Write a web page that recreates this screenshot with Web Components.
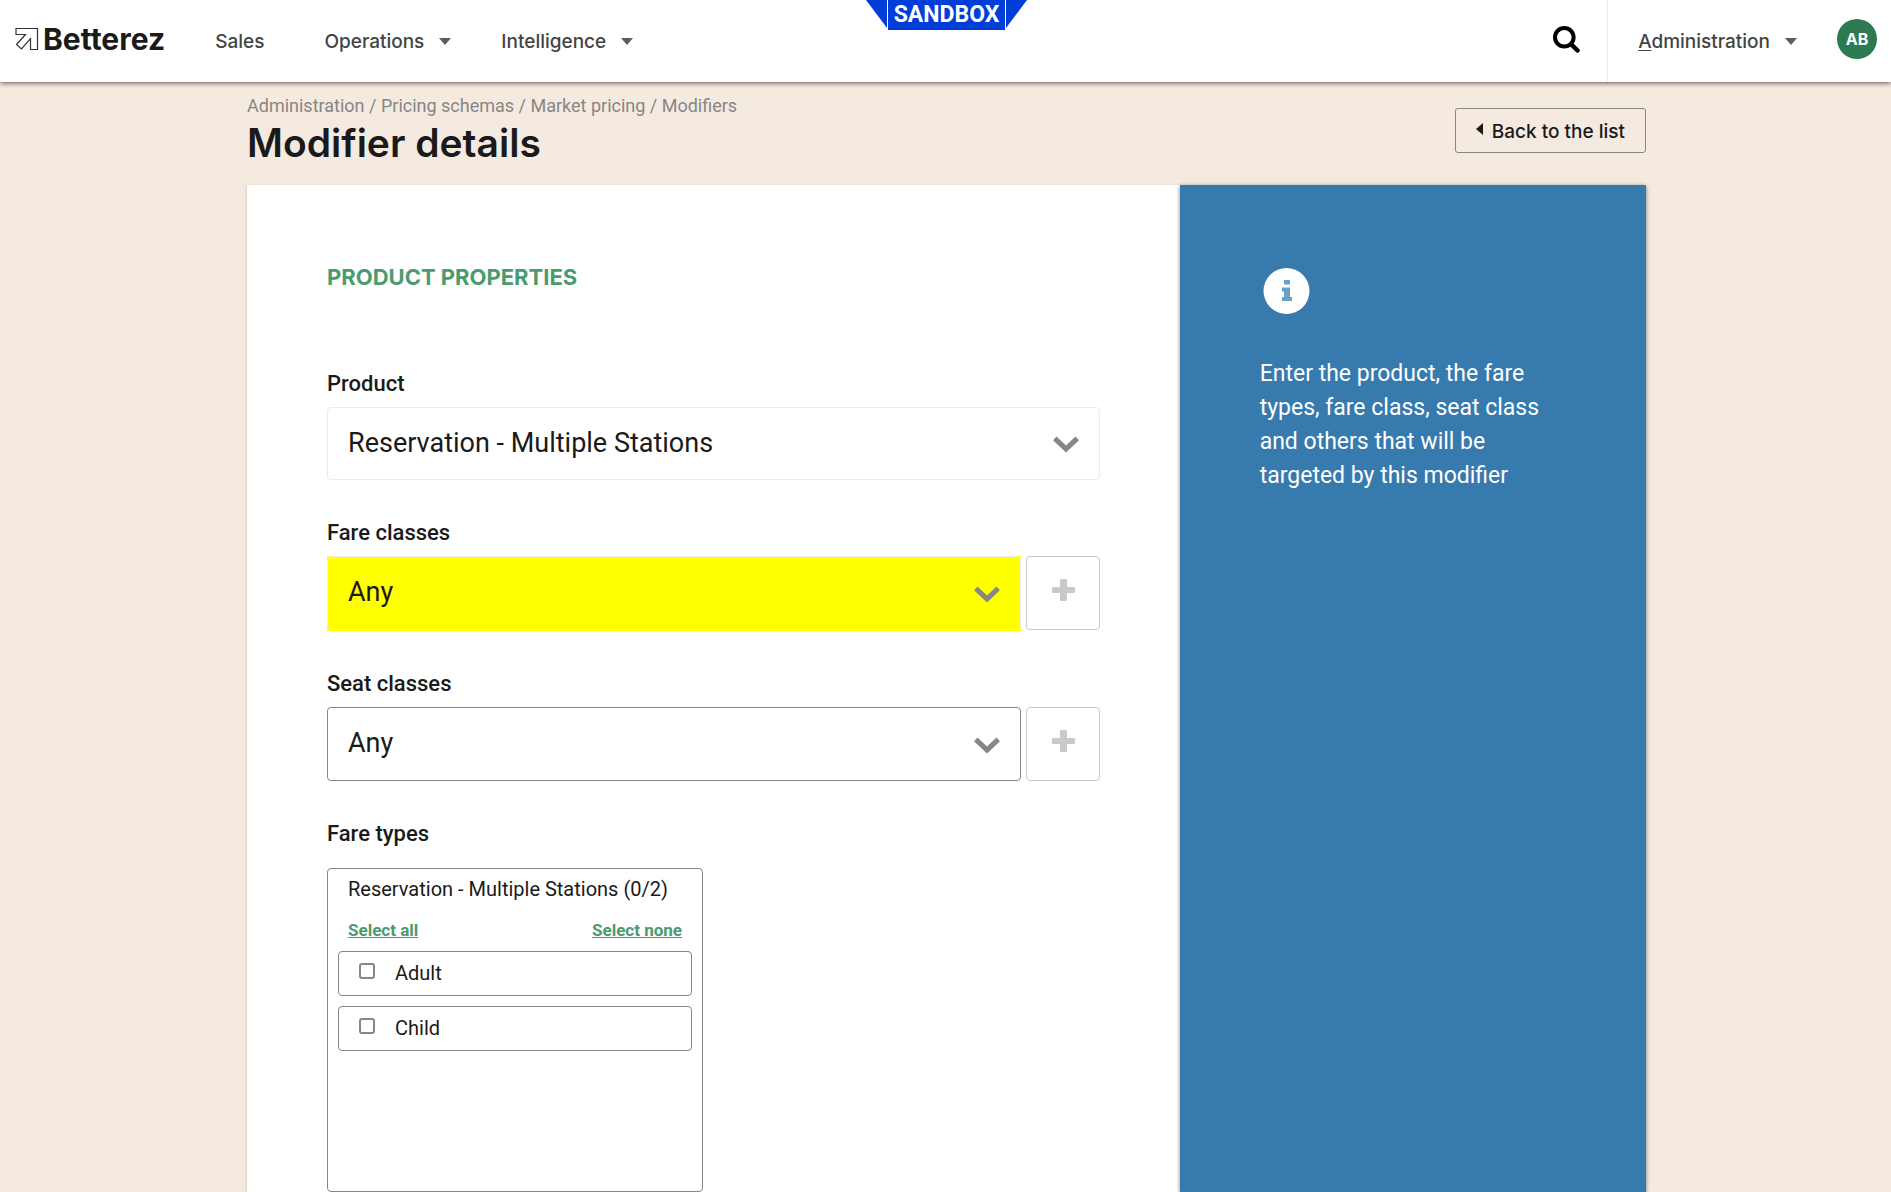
<!DOCTYPE html>
<html lang="en">
<head>
<meta charset="utf-8">
<title>Modifier details - Betterez</title>
<style>
  :root {
    --ink: #1a1a1a;
    --nav-ink: #444;
    --grey: #868686;
    --green: #4a9b70;
    --blue: #377aae;
    --sand: #f5eae0;
    --heading-font: Inter, "Liberation Sans", sans-serif;
    --body-font: Roboto, "Liberation Sans", sans-serif;
  }
  * { box-sizing: border-box; }
  body {
    margin: 0;
    background: var(--sand);
    color: var(--ink);
    font-family: var(--body-font);
  }
</style>
</head>
<body>
<bz-app></bz-app>

<script>
const BASE = `*{box-sizing:border-box} a{color:inherit;text-decoration:none} button,select,input{font:inherit;color:inherit;margin:0}`;

function define(name, css, html) {
  customElements.define(name, class extends HTMLElement {
    constructor() {
      super();
      const root = this.attachShadow({ mode: "open" });
      const template = document.createElement("template");
      const markup = typeof html === "function" ? html(this) : html;
      template.innerHTML = `<style>${BASE}${css}</style>${markup}`;
      root.appendChild(template.content.cloneNode(true));
    }
  });
}

define("bz-logo", `
  :host { display: block; }
  a { display: flex; align-items: center; gap: 4px; padding-bottom: 4px; font: 700 30px/34px var(--heading-font); color: var(--ink); }
  svg { display: block; }
`, `
  <a href="#home">
    <svg width="24" height="24" viewBox="0 0 24 24" fill="none" stroke="#333" stroke-width="1.2">
      <path d="M1 1.500H22.500V22.500H15.500V11.500L6.500 22L1.500 17.500L10.500 7.500H1Z"/>
    </svg>
    <span>Betterez</span>
  </a>
`);

define("bz-nav-item", `
  :host { display: block; }
  a { display: flex; align-items: center; gap: 15px; font: 500 19px/24px var(--heading-font); color: var(--nav-ink); }
  span { padding-top: 2px; }
  svg { display: none; }
  :host([menu]) svg { display: block; }
`, `
  <a href="#menu"><span><slot></slot></span>
    <svg width="12" height="7" viewBox="0 0 12 7"><path d="M0 0H12L6 7Z" fill="#5c5c5c"/></svg>
  </a>
`);

define("bz-ribbon", `
  :host { display: flex; gap: 1px; color: #fff; font: 700 23px/30px var(--body-font); }
  span { background: #003dd9; padding: 0 6px; height: 30px; }
  svg { display: block; }
`, `
  <svg width="21" height="28" viewBox="0 0 21 28"><path d="M0 0H21V28Z" fill="#003dd9"/></svg>
  <span>SANDBOX</span>
  <svg width="21" height="28" viewBox="0 0 21 28"><path d="M0 0H21L0 28Z" fill="#003dd9"/></svg>
`);

define("bz-header", `
  :host { display: block; position: relative; background: #fff; box-shadow: 0 1px 5px rgba(50,25,20,.75); }
  header { display: flex; height: 82px; padding: 0 14px 0 15px; align-items: center; }
  nav { display: flex; gap: 50px; padding-left: 50px; }
  nav > :first-child { margin-right: 10px; }
  .ribbon { position: absolute; top: 0; left: 0; right: 0; display: flex; justify-content: center; padding-left: 2px; pointer-events: none; }
  button { margin-left: auto; padding: 0 27px 4px; border: 0; background: none; }
  button svg { display: block; }
  .account { display: flex; align-items: center; gap: 40px; align-self: stretch; padding-left: 30px; border-left: 1px solid #ebebeb; }
  .avatar { display: grid; place-items: center; width: 40px; height: 40px; margin-bottom: 4px; border-radius: 50%; background: #2d7a50; color: #fff; font: 700 16px/20px var(--heading-font); }
  u { text-underline-offset: 2px; }
`, `
  <header>
    <bz-logo></bz-logo>
    <nav>
      <bz-nav-item>Sales</bz-nav-item>
      <bz-nav-item menu>Operations</bz-nav-item>
      <bz-nav-item menu>Intelligence</bz-nav-item>
    </nav>
    <button aria-label="Search">
      <svg width="27" height="27" viewBox="0 0 27 27" fill="none" stroke="#000"><circle cx="11.300" cy="11.300" r="9.300" stroke-width="4"/><path d="M18 18L24.500 24.500" stroke-width="4.500" stroke-linecap="round"/></svg>
    </button>
    <div class="account">
      <bz-nav-item menu><u>A</u>dministration</bz-nav-item>
      <a class="avatar" href="#profile">AB</a>
    </div>
  </header>
  <div class="ribbon"><bz-ribbon></bz-ribbon></div>
`);

define("bz-page-head", `
  :host { display: flex; justify-content: space-between; align-items: flex-start; padding-top: 12px; height: 103px; }
  nav { font: 400 18px/24px var(--body-font); color: var(--grey); }
  h1 { margin: 1px 0 0; font: 600 39px/48px var(--heading-font); }
  button { display: flex; align-items: center; gap: 9px; height: 45px; margin-top: 14px; padding: 0 20px; border: 1px solid #868686; border-radius: 3px; background: none; font: 500 19px/24px var(--heading-font); }
  button span { padding-top: 2px; }
  svg { display: block; margin-bottom: 4px; }
`, `
  <div>
    <nav><a href="#admin">Administration</a> / <a href="#schemas">Pricing schemas</a> / <a href="#market">Market pricing</a> / <a href="#modifiers">Modifiers</a></nav>
    <h1>Modifier details</h1>
  </div>
  <button><svg width="7" height="12" viewBox="0 0 7 12"><path d="M7 0V12L0 6Z" fill="#1a1a1a"/></svg><span>Back to the list</span></button>
`);

define("bz-select-field", `
  :host { display: block; }
  label { display: block; font: 500 22px/34px var(--body-font); margin-bottom: 6px; }
  .row { display: flex; gap: 5px; }
  .box { flex: 1; display: grid; align-items: center; }
  .box > * { grid-area: 1 / 1; }
  select { appearance: none; width: 100%; height: 74px; padding: 0 60px 2px 20px; border: 1px solid #868686; border-radius: 4px; background: #fff; font-size: 27px; }
  .box svg { justify-self: end; margin: 2px 21px 0 0; pointer-events: none; }
  button { display: grid; place-items: center; width: 74px; height: 74px; padding: 0 0 6px; border: 1px solid #c9c9c9; border-radius: 4px; background: #fff; }
  :host([quiet]) select { height: 73px; border-color: #ebebeb; }
  :host([marked]) .box { background: #ff0; padding-bottom: 1px; }
  :host([marked]) select { background: #ff0; border-color: #ececec; }
  :host(:not([addable])) button { display: none; }
`, host => `
  <label for="choice">${host.getAttribute("label")}</label>
  <div class="row">
    <div class="box">
      <select id="choice"><option>${host.getAttribute("value")}</option></select>
      <svg width="26" height="17" viewBox="0 0 26 17"><path d="M3.500 .5L13 9.500L22.500 .5L25.500 3.700Q25.800 4.300 25.500 4.800L13 16.500L.5 4.800Q.2 4.300 .5 3.700Z" fill="#868686"/></svg>
    </div>
    <button aria-label="Add"><svg width="24" height="22" viewBox="0 0 24 22"><path transform="translate(1 0)" d="M9 0H14Q15 0 15 1V8H22Q23 8 23 9V13Q23 14 22 14H15V21Q15 22 14 22H9Q8 22 8 21V14H1Q0 14 0 13V9Q0 8 1 8H8V1Q8 0 9 0Z" fill="#c9c9c9"/></svg></button>
  </div>
`);

define("bz-check-row", `
  :host { display: block; }
  label { display: flex; align-items: center; gap: 20px; height: 45px; padding: 0 19px 2px 20px; border: 1px solid #868686; border-radius: 4px; font: 400 20px/24px var(--body-font); }
  input { appearance: none; width: 16px; height: 16px; margin-bottom: 4px; border: 2px solid #868686; border-radius: 3px; background: #fff; }
`, `<label><input type="checkbox"><span><slot></slot></span></label>`);

define("bz-fare-types", `
  :host { display: block; }
  h3 { margin: 0 0 17px; font: 500 22px/34px var(--body-font); }
  section { width: 376px; height: 324px; padding: 8px 10px; border: 1px solid #868686; border-radius: 4px; }
  p { margin: 0 10px; font: 400 20px/24px var(--body-font); }
  .links { display: flex; justify-content: space-between; margin: 17px 10px 9px; color: var(--green); font: 700 17px/24px var(--body-font); }
  .links a { text-decoration: underline; }
  .rows { display: grid; gap: 10px; }
`, `
  <h3>Fare types</h3>
  <section>
    <p>Reservation - Multiple Stations (0/2)</p>
    <div class="links"><a href="#all">Select all</a><a href="#none">Select none</a></div>
    <div class="rows">
      <bz-check-row>Adult</bz-check-row>
      <bz-check-row>Child</bz-check-row>
    </div>
  </section>
`);

define("bz-info-panel", `
  :host { display: block; background: var(--blue); color: #fff; padding: 83px 80px 0; box-shadow: 0 1px 4px rgba(0,0,0,.5); }
  svg { display: block; margin: 0 0 42px 3px; }
  p { margin: 0; font: 400 23px/34px var(--body-font); }
`, `
  <svg width="47" height="47" viewBox="0 0 47 47"><circle cx="23.500" cy="23" r="23" fill="#fff"/><path d="M21 12H27V16.500H21ZM19 19.500H27V29H29V33H19V29H21V23.500H19Z" fill="#6ba1c9"/></svg>
  <p><slot></slot></p>
`);

define("bz-app", `
  :host { display: block; }
  main { padding: 0 245px 0 247px; }
  .card { display: grid; grid-template-columns: 2fr 1fr; }
  .form { display: flex; flex-direction: column; gap: 36px; padding: 78px 80px 0; background: #fff; box-shadow: 0 1px 3px rgba(90,50,20,.25); }
  h2 { margin: 0 0 40px; color: var(--green); font: 700 22px/28px var(--heading-font); }
`, `
  <bz-header></bz-header>
  <main>
    <bz-page-head></bz-page-head>
    <div class="card">
      <div class="form">
        <h2>PRODUCT PROPERTIES</h2>
        <bz-select-field quiet label="Product" value="Reservation - Multiple Stations"></bz-select-field>
        <bz-select-field addable marked label="Fare classes" value="Any"></bz-select-field>
        <bz-select-field addable label="Seat classes" value="Any"></bz-select-field>
        <bz-fare-types></bz-fare-types>
      </div>
      <bz-info-panel>Enter the product, the fare types, fare class, seat class and others that will be targeted by this modifier</bz-info-panel>
    </div>
  </main>
`);
</script>
</body>
</html>
